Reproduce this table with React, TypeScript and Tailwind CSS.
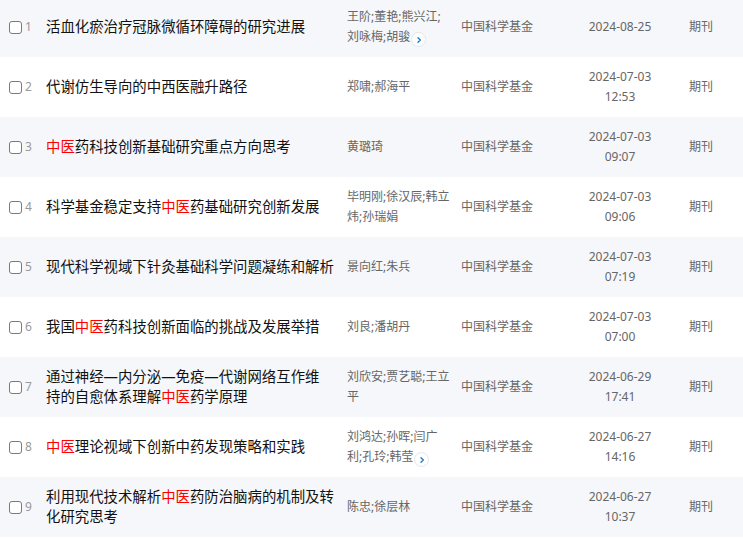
import { Fragment } from 'react'

type Row = {
  title: string[]
  authors: string[]
  more?: boolean
  date: string
  time?: string
}

const ROWS: Row[] = [
  { title: ['活血化瘀治疗冠脉微循环障碍的研究进展'], authors: ['王阶;董艳;熊兴江;', '刘咏梅;胡骏'], more: true, date: '2024-08-25' },
  { title: ['代谢仿生导向的中西医融升路径'], authors: ['郑啸;郝海平'], date: '2024-07-03', time: '12:53' },
  { title: ['#中医#药科技创新基础研究重点方向思考'], authors: ['黄璐琦'], date: '2024-07-03', time: '09:07' },
  { title: ['科学基金稳定支持#中医#药基础研究创新发展'], authors: ['毕明刚;徐汉辰;韩立', '炜;孙瑞娟'], date: '2024-07-03', time: '09:06' },
  { title: ['现代科学视域下针灸基础科学问题凝练和解析'], authors: ['景向红;朱兵'], date: '2024-07-03', time: '07:19' },
  { title: ['我国#中医#药科技创新面临的挑战及发展举措'], authors: ['刘良;潘胡丹'], date: '2024-07-03', time: '07:00' },
  { title: ['通过神经—内分泌—免疫—代谢网络互作维', '持的自愈体系理解#中医#药学原理'], authors: ['刘欣安;贾艺聪;王立', '平'], date: '2024-06-29', time: '17:41' },
  { title: ['#中医#理论视域下创新中药发现策略和实践'], authors: ['刘鸿达;孙晖;闫广', '利;孔玲;韩莹'], more: true, date: '2024-06-27', time: '14:16' },
  { title: ['利用现代技术解析#中医#药防治脑病的机制及转', '化研究思考'], authors: ['陈忠;徐层林'], date: '2024-06-27', time: '10:37' },
]

// "#中医#" marks the highlighted keyword
function Highlight({ text }: { text: string }) {
  const parts = text.split('#')
  return (
    <>
      {parts.map((p, i) =>
        i % 2 === 1 ? (
          <span key={i} className="text-[#ff0000]">{p}</span>
        ) : (
          <Fragment key={i}>{p}</Fragment>
        ),
      )}
    </>
  )
}

function MoreButton() {
  return (
    <span className="inline-flex w-[15px] h-[15px] ml-[1px] rounded-full border border-[#e4e6ea] bg-white items-center justify-center align-[-3px]">
      <svg width="8" height="8" viewBox="0 0 24 24" fill="none" stroke="#1677d2" strokeWidth="4" strokeLinecap="round" strokeLinejoin="round">
        <polyline points="9 5 16 12 9 19" />
      </svg>
    </span>
  )
}

export default function App() {
  return (
    <div className="w-[743px] h-[540px] overflow-hidden bg-white" style={{ fontFamily: '"Noto Sans", "Noto Sans CJK SC", sans-serif' }}>
      <div className="-mt-[3px]">
        {ROWS.map((row, i) => (
          <div key={i} className={`flex items-center h-[60px] pl-[1px] ${i % 2 === 0 ? 'bg-[#f5f7fa]' : 'bg-white'}`}>
            {/* checkbox + index */}
            <div className="w-[45px] flex items-center pl-[8px]">
              <span className="w-[13px] h-[13px] rounded-[3px] border border-[#7a7a7a] bg-white" />
              <span className="ml-[3px] text-[12px] leading-none text-[#999]">{i + 1}</span>
            </div>

            {/* title */}
            <div className="w-[301px] text-[14.4px] leading-[20px] text-[#111]">
              {row.title.map((line, j) => (
                <div key={j} className="whitespace-nowrap">
                  <Highlight text={line} />
                </div>
              ))}
            </div>

            {/* authors */}
            <div className="w-[114px] text-[12px] leading-[20px] text-[#666]">
              {row.authors.map((line, j) => (
                <div key={j} className="whitespace-nowrap">
                  {line}
                  {row.more && j === row.authors.length - 1 && <MoreButton />}
                </div>
              ))}
            </div>

            {/* fund */}
            <div className="w-[120px] text-[12px] text-[#666]">中国科学基金</div>

            {/* date */}
            <div className="w-[78px] text-center text-[12px] leading-[20px] text-[#666]">
              <div>{row.date}</div>
              {row.time && <div>{row.time}</div>}
            </div>

            {/* type */}
            <div className="pl-[30px] text-[12px] text-[#666]">期刊</div>
          </div>
        ))}
      </div>
    </div>
  )
}
